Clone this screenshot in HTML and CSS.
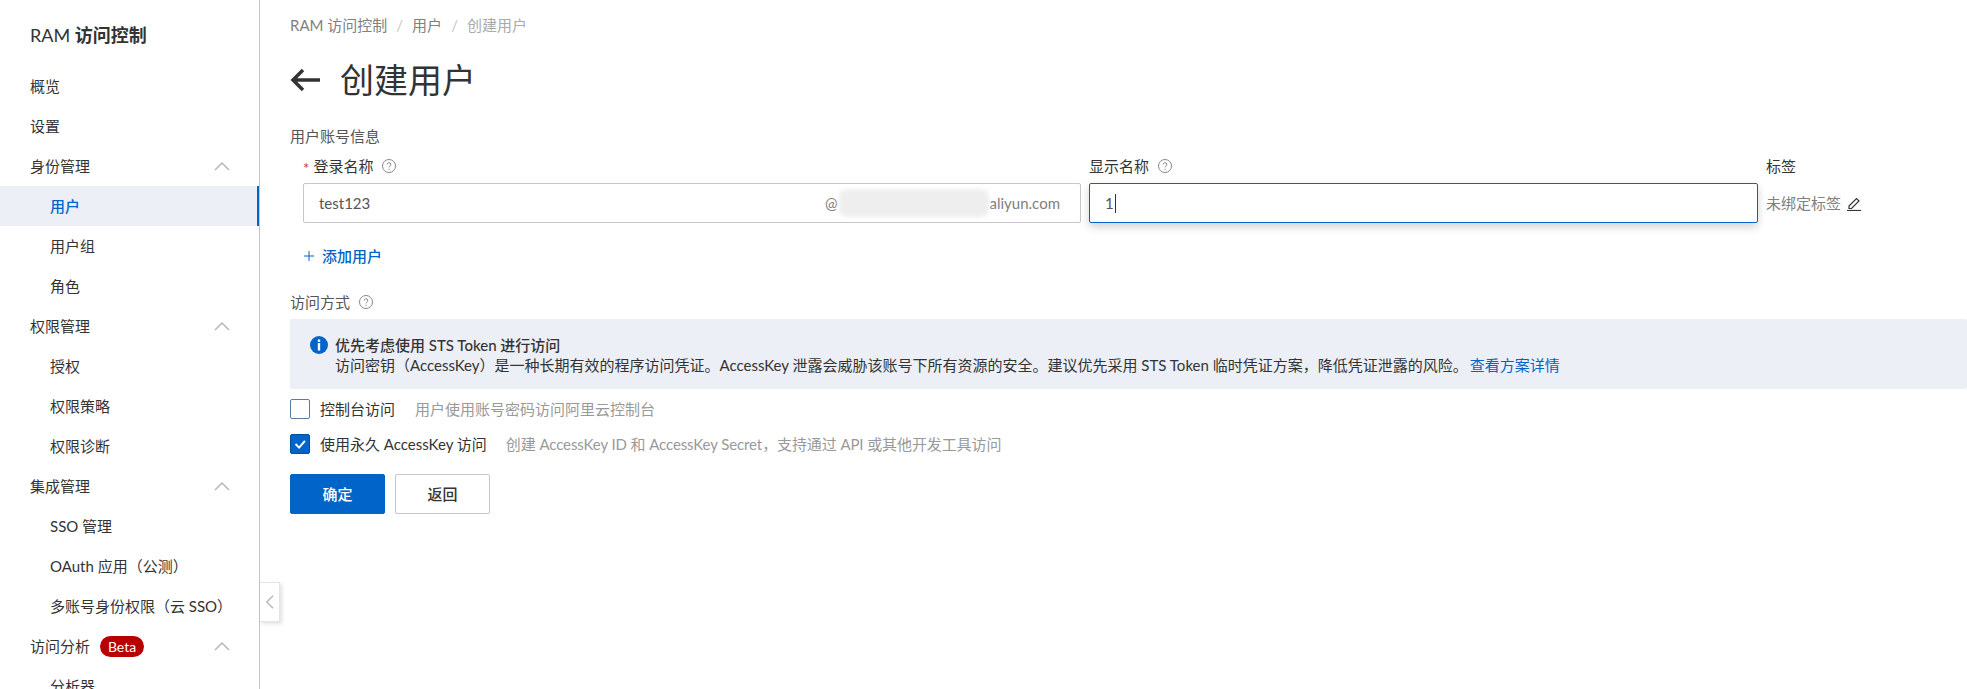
FILE: index.html
```html
<!DOCTYPE html>
<html lang="zh-CN">
<head>
<meta charset="utf-8">
<title>创建用户</title>
<link rel="stylesheet" href="styles.css">
</head>
<body>
<div class="app">
  <aside class="sidebar">
    <h1 class="brand">RAM <b>访问控制</b></h1>
    <ul class="menu">
      <li class="item">概览</li>
      <li class="item">设置</li>
      <li class="item group">身份管理<svg class="chev" viewBox="0 0 16 10"><polyline points="1,9 8,2 15,9"/></svg></li>
      <li class="item child active">用户</li>
      <li class="item child">用户组</li>
      <li class="item child">角色</li>
      <li class="item group">权限管理<svg class="chev" viewBox="0 0 16 10"><polyline points="1,9 8,2 15,9"/></svg></li>
      <li class="item child">授权</li>
      <li class="item child">权限策略</li>
      <li class="item child">权限诊断</li>
      <li class="item group">集成管理<svg class="chev" viewBox="0 0 16 10"><polyline points="1,9 8,2 15,9"/></svg></li>
      <li class="item child">SSO 管理</li>
      <li class="item child">OAuth 应用（公测）</li>
      <li class="item child">多账号身份权限（云 SSO）</li>
      <li class="item group">访问分析<span class="beta">Beta</span><svg class="chev" viewBox="0 0 16 10"><polyline points="1,9 8,2 15,9"/></svg></li>
      <li class="item child">分析器</li>
    </ul>
  </aside>
  <button class="collapse" aria-label="收起"><svg viewBox="0 0 10 16"><polyline points="9,1 2,8 9,15"/></svg></button>
  <main class="main">
    <nav class="crumbs">
      <span>RAM 访问控制</span><i>/</i><span>用户</span><i>/</i><span class="current">创建用户</span>
    </nav>
    <header class="head">
      <svg class="back" viewBox="0 0 30 24"><path d="M30 12H3M13 2 3 12l10 10"/></svg>
      <h2 class="title">创建用户</h2>
    </header>
    <div class="section-label">用户账号信息</div>
    <div class="fields">
      <div class="flabel"><em>*</em>登录名称<svg class="help" viewBox="0 0 14 14"><circle cx="7" cy="7" r="6.500"/><path d="M5.200 5.500a1.800 1.800 0 1 1 2.600 1.600c-.6.300-.8.700-.8 1.300"/><path d="M7 9.800v1.200"/></svg></div>
      <div class="flabel">显示名称<svg class="help" viewBox="0 0 14 14"><circle cx="7" cy="7" r="6.500"/><path d="M5.200 5.500a1.800 1.800 0 1 1 2.600 1.600c-.6.300-.8.700-.8 1.300"/><path d="M7 9.800v1.200"/></svg></div>
      <div class="flabel">标签</div>
      <div class="input">
        <span class="value">test123</span>
        <span class="suffix">@<span class="smudge"></span>aliyun.com</span>
      </div>
      <div class="input focus"><span class="value">1</span><span class="caret"></span></div>
      <div class="tags">未绑定标签<svg class="pen" viewBox="0 0 16 16"><path d="M3 11 10.500 3.500l2.500 2.500L5.500 13.500H3z"/><path d="M1 15.500h14"/></svg></div>
    </div>
    <div class="add"><svg viewBox="0 0 12 12"><path d="M6 1v10M1 6h10"/></svg>添加用户</div>
    <div class="access-label">访问方式<svg class="help" viewBox="0 0 14 14"><circle cx="7" cy="7" r="6.500"/><path d="M5.200 5.500a1.800 1.800 0 1 1 2.600 1.600c-.6.300-.8.700-.8 1.300"/><path d="M7 9.800v1.200"/></svg></div>
    <div class="alert">
      <svg class="info" viewBox="0 0 18 18"><circle cx="9" cy="9" r="9"/><rect x="7.800" y="3.500" width="2.400" height="2.400"/><rect x="7.800" y="7" width="2.400" height="7.500"/></svg>
      <div>
        <div class="alert-title">优先考虑使用 STS Token 进行访问</div>
        <div class="alert-body">访问密钥（AccessKey）是一种长期有效的程序访问凭证。AccessKey 泄露会威胁该账号下所有资源的安全。建议优先采用 STS Token 临时凭证方案，降低凭证泄露的风险。<a class="link">查看方案详情</a></div>
      </div>
    </div>
    <div class="check first"><span class="box"></span><span class="check-name">控制台访问</span><span class="check-desc">用户使用账号密码访问阿里云控制台</span></div>
    <div class="check"><span class="box on"><svg viewBox="0 0 20 20"><polyline points="5,10 9,14 15.500,6.500"/></svg></span><span class="check-name">使用永久 AccessKey 访问</span><span class="check-desc second">创建 AccessKey ID 和 AccessKey Secret，支持通过 API 或其他开发工具访问</span></div>
    <div class="actions">
      <button class="btn primary">确定</button>
      <button class="btn">返回</button>
    </div>
  </main>
</div>
</body>
</html>
```
FILE: styles.css
```css
* { box-sizing: border-box; }
html, body { margin: 0; height: 100%; overflow: hidden; background: #fff; }
body { font: 15px/20px Lato, "Noto Sans CJK SC", sans-serif; color: #333; text-spacing-trim: space-all; }
.app { display: flex; height: 689px; position: relative; }
.sidebar { width: 260px; flex: none; border-right: 1px solid #c4c6cc; overflow: hidden; }
.brand { margin: 0; padding: 25px 0 0 30px; height: 66px; font-size: 18px; line-height: 20px; font-weight: 400; color: #333; }
.brand b { font-weight: 700; }
.menu { list-style: none; margin: 0; padding: 0; }
.item { height: 40px; line-height: 40px; padding-left: 30px; position: relative; display: flex; align-items: center; }
.child { padding-left: 50px; }
.active { background: #eceff5; color: #0064c8; font-weight: 500; border-right: 2px solid #0064c8; }
.chev { position: absolute; left: 214px; top: 15px; width: 16px; height: 10px; fill: none; stroke: #b4b6bb; stroke-width: 1.500; }
.beta { margin-left: 10px; width: 44px; height: 21px; line-height: 21px; border-radius: 11px; background: #b90000; color: #fff; font-size: 14px; text-align: center; }
.collapse { position: absolute; left: 260px; top: 582px; width: 20px; height: 40px; padding: 0; background: #fff; border: 1px solid #e3e4e8; border-left: 0; box-shadow: 2px 2px 4px rgba(0,0,0,.12); display: flex; align-items: center; justify-content: center; }
.collapse svg { width: 9px; height: 16px; fill: none; stroke: #b4b6bb; stroke-width: 1.500; }
.main { flex: 1; min-width: 0; padding-left: 30px; }
.crumbs { height: 50px; display: flex; align-items: center; color: #808080; }
.crumbs i { font-style: normal; color: #c8c8c8; margin: 0 9px; }
.crumbs .current { color: #aaa; }
.head { height: 60px; display: flex; align-items: center; }
.back { width: 30px; height: 24px; margin-right: 20px; fill: none; stroke: #333; stroke-width: 3.500; }
.title { margin: 0; font-size: 34px; line-height: 48px; font-weight: 400; color: #333; }
.section-label { margin-top: 16px; color: #555; }
.fields { display: grid; grid-template-columns: 778px 669px 1fr; column-gap: 8px; row-gap: 7px; margin: 10px 0 0 13px; }
.flabel { display: flex; align-items: center; height: 20px; }
.flabel em { font-style: normal; color: #d93026; margin-right: 4px; margin-top: 3px; }
.help { width: 14px; height: 14px; margin-left: 9px; fill: none; stroke: #888; stroke-width: 1; }
.input { height: 40px; border: 1px solid #c4c6cc; border-radius: 2px; display: flex; align-items: center; justify-content: space-between; padding: 0 20px 0 15px; color: #555; }
.input.focus { border-color: #0064c8; justify-content: flex-start; box-shadow: 0 4px 8px rgba(0,0,0,.18); }
.caret { width: 1px; height: 19px; background: #333; margin-left: 1px; }
.suffix { display: inline-flex; align-items: center; color: #808080; }
.smudge { width: 150px; height: 28px; margin: 0 1px; background: #eee; border-radius: 8px; filter: blur(2px); }
.tags { display: flex; align-items: center; color: #808080; }
.pen { width: 16px; height: 16px; margin-left: 5px; fill: none; stroke: #333; stroke-width: 1.200; }
.add { margin: 23px 0 0 13px; height: 20px; display: flex; align-items: center; color: #0064c8; font-weight: 500; }
.add svg { width: 12px; height: 12px; margin-right: 7px; fill: none; stroke: #0064c8; stroke-width: 1; }
.access-label { display: flex; align-items: center; margin-top: 26px; height: 20px; color: #555; }
.alert { margin-top: 7px; height: 70px; background: #eceff5; border-radius: 2px; padding: 16px 20px; display: flex; gap: 7px; }
.info { width: 18px; height: 18px; flex: none; margin-top: 1px; fill: #0064c8; }
.info rect { fill: #fff; }
.alert-title { font-weight: 500; }
.link { color: #0064c8; margin-left: 2px; }
.check { display: flex; align-items: center; height: 20px; margin-top: 15px; }
.check.first { margin-top: 10px; }
.box { width: 20px; height: 20px; border: 1px solid #5a7d9e; border-radius: 2px; margin-right: 10px; background: #fff; }
.box.on { background: #0064c8; border-color: #004f9e; }
.box svg { display: block; width: 18px; height: 18px; fill: none; stroke: #fff; stroke-width: 2.200; }
.check-desc { color: #999; margin-left: 20px; }
.check-desc.second { margin-left: 19px; letter-spacing: -.1px; }
.actions { display: flex; gap: 10px; margin-top: 20px; }
.btn { width: 95px; height: 40px; border: 1px solid #c4c6cc; border-radius: 2px; background: #fff; color: #333; font: 500 15px/20px Lato, "Noto Sans CJK SC", sans-serif; padding: 0; }
.btn.primary { background: #0064c8; border-color: #0064c8; color: #fff; }
```
